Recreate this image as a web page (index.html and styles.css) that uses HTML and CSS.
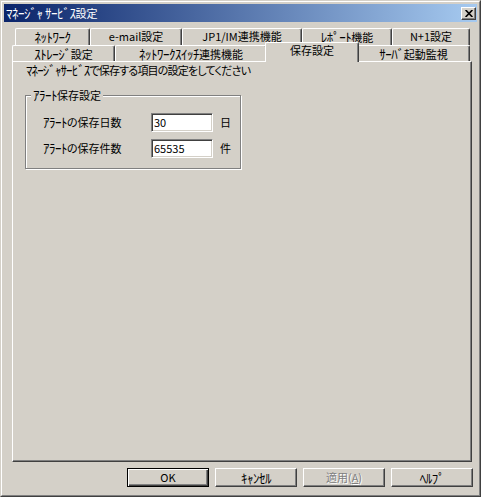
FILE: index.html
```html
<!DOCTYPE html>
<html lang="ja">
<head>
<meta charset="utf-8">
<title>ﾏﾈｰｼﾞｬ ｻｰﾋﾞｽ設定</title>
<link rel="stylesheet" href="styles.css">
</head>
<body>
<div class="window">
  <div class="frame">
    <div class="titlebar">
      <span class="title"><span class="hw">ﾏﾈｰｼﾞｬ ｻｰﾋﾞｽ</span>設定</span>
      <button class="close" aria-label="閉じる"><svg width="8" height="7" viewBox="0 0 8 7"><path d="M0.6 0 L7.4 7 M7.4 0 L0.6 7" stroke="#000" stroke-width="1.7" fill="none"/></svg></button>
    </div>
    <div class="content">
      <div class="tabs">
        <div class="tabrow back">
          <div class="tab w-net"><span class="hw">ﾈｯﾄﾜｰｸ</span></div>
          <div class="tab w-mail">e-mail設定</div>
          <div class="tab w-jp1">JP1/IM連携機能</div>
          <div class="tab w-report"><span class="hw">ﾚﾎﾟｰﾄ</span>機能</div>
          <div class="tab w-n1">N+1設定</div>
        </div>
        <div class="tabrow front">
          <div class="tab w-storage"><span class="hw">ｽﾄﾚｰｼﾞ</span>設定</div>
          <div class="tab w-switch"><span class="hw">ﾈｯﾄﾜｰｸｽｲｯﾁ</span>連携機能</div>
          <div class="tab w-save selected">保存設定</div>
          <div class="tab w-server"><span class="hw">ｻｰﾊﾞ</span>起動監視</div>
        </div>
      </div>
      <div class="panel">
        <p class="intro"><span class="hw">ﾏﾈｰｼﾞｬｻｰﾋﾞｽ</span>で保存する項目の設定をしてください</p>
        <div class="group">
          <span class="group-label"><span class="hw">ｱﾗｰﾄ</span>保存設定</span>
          <div class="fields">
            <label class="field-label" for="days"><span class="hw">ｱﾗｰﾄ</span>の保存日数</label>
            <input class="field-input" id="days" type="text" value="30">
            <span class="unit">日</span>
            <label class="field-label" for="count"><span class="hw">ｱﾗｰﾄ</span>の保存件数</label>
            <input class="field-input" id="count" type="text" value="65535">
            <span class="unit">件</span>
          </div>
        </div>
      </div>
      <div class="buttons">
        <button class="btn default">OK</button>
        <button class="btn"><span class="hw">ｷｬﾝｾﾙ</span></button>
        <button class="btn" disabled>適用(<u>A</u>)</button>
        <button class="btn"><span class="hw">ﾍﾙﾌﾟ</span></button>
      </div>
    </div>
  </div>
</div>
</body>
</html>
```
FILE: styles.css
```css
* { box-sizing: border-box; }
html, body { margin: 0; padding: 0; background: #fff; }
body {
  font-family: "Noto Sans CJK JP", "Noto Sans", sans-serif;
  font-size: 11px;
  color: #000;
  font-feature-settings: "palt";
}
.hw {
  font-size: 13px;
  letter-spacing: -0.5px;
  font-feature-settings: normal;
}
.window {
  width: 481px;
  height: 497px;
  background: #d4d0c8;
  border: 1px solid;
  border-color: #d4d0c8 #404040 #404040 #d4d0c8;
}
.frame {
  height: 100%;
  border: 1px solid;
  border-color: #fff #808080 #808080 #fff;
  padding: 2px;
  display: flex;
  flex-direction: column;
}
.titlebar {
  height: 18px;
  flex: none;
  display: flex;
  align-items: center;
  justify-content: space-between;
  padding: 0 1px 0 2px;
  background: linear-gradient(to right, #0a246a, #a6caf0);
  color: #fff;
}
.title { line-height: 18px; white-space: nowrap; }
.close {
  width: 15px;
  height: 13px;
  padding: 0;
  margin: 0;
  display: flex;
  align-items: center;
  justify-content: center;
  background: #d4d0c8;
  border: 1px solid;
  border-color: #fff #404040 #404040 #fff;
  box-shadow: inset -1px -1px #808080;
}
.close svg { display: block; }
.content {
  flex: 1;
  display: flex;
  flex-direction: column;
  padding-top: 6px;
}
.tabs { margin-left: 8px; width: 460px; }
.tabrow { display: flex; }
.tabrow.back { height: 17px; padding-left: 3px; }
.tabrow.front { height: 16px; }
.tab {
  flex: none;
  height: 100%;
  background: #d4d0c8;
  border-top: 1px solid #fff;
  border-left: 1px solid #fff;
  border-right: 1px solid #404040;
  box-shadow: inset -1px 0 #808080;
  border-radius: 2px 2px 0 0;
  text-align: center;
  line-height: 15px;
  white-space: nowrap;
}
.w-net { width: 75px; }
.w-mail { width: 92px; }
.w-jp1 { width: 120px; }
.w-report { width: 90px; }
.w-n1 { width: 78px; }
.w-storage { width: 103px; }
.w-switch { width: 152px; }
.w-save { width: 90px; }
.w-server { width: 113px; }
.tab.selected {
  position: relative;
  z-index: 1;
  width: 94px;
  height: 20px;
  margin: -3px -2px -1px -2px;
}
.panel {
  flex: 1;
  margin: 0 5px 0 8px;
  border: 1px solid;
  border-color: #fff #404040 #404040 #fff;
  box-shadow: inset -1px -1px #808080;
  padding: 1px 0 0 13px;
}
.intro {
  margin: 0;
  line-height: 14px;
  white-space: nowrap;
  letter-spacing: -0.8px;
}
.intro .hw { letter-spacing: -0.9px; }
.group {
  position: relative;
  width: 216px;
  margin: 18px 0 0 -1px;
  border: 1px solid #808080;
  box-shadow: 1px 1px 0 #fff, inset 1px 1px 0 #fff;
  padding: 16px 0 10px 17px;
}
.group-label {
  position: absolute;
  top: -8px;
  left: 5px;
  padding: 0 2px;
  background: #d4d0c8;
  line-height: 14px;
  white-space: nowrap;
}
.fields {
  display: grid;
  grid-template-columns: 101px 62px auto;
  column-gap: 7px;
  row-gap: 6px;
  align-items: center;
}
.field-label, .unit { line-height: 19px; white-space: nowrap; }
.field-input {
  width: 62px;
  height: 19px;
  margin: 0;
  padding: 0 2px;
  font: inherit;
  font-feature-settings: "palt";
  color: #000;
  background: #fff;
  border: 1px solid;
  border-color: #808080 #fff #fff #808080;
  box-shadow: inset 1px 1px #404040, inset -1px -1px #d4d0c8;
  outline: none;
}
.buttons {
  flex: none;
  display: flex;
  justify-content: flex-end;
  gap: 6px;
  margin: 6px 4px 6px 0;
}
.btn {
  width: 82px;
  height: 19px;
  margin: 0;
  padding: 0;
  font: inherit;
  font-feature-settings: "palt";
  line-height: 17px;
  color: #000;
  background: #d4d0c8;
  border: 1px solid;
  border-color: #fff #404040 #404040 #fff;
  box-shadow: inset -1px -1px #808080;
}
.btn.default {
  border-color: #000;
  box-shadow: inset 1px 1px #fff, inset -1px -1px #404040, inset -2px -2px #808080;
}
.btn:disabled {
  color: #808080;
  text-shadow: 1px 1px #fff;
}
```
